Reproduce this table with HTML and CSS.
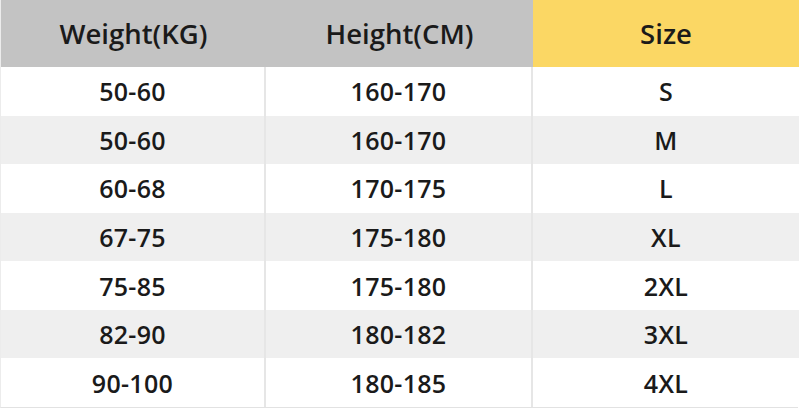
FILE: index.html
```html
<!DOCTYPE html>
<html>
<head>
<meta charset="utf-8">
<link rel="stylesheet" href="styles.css">
</head>
<body>
<div class="chart">
  <div class="cell head gray">Weight(KG)</div>
  <div class="cell head gray">Height(CM)</div>
  <div class="cell head yellow">Size</div>

  <div class="cell">50-60</div><div class="cell">160-170</div><div class="cell">S</div>
  <div class="cell alt">50-60</div><div class="cell alt">160-170</div><div class="cell alt">M</div>
  <div class="cell">60-68</div><div class="cell">170-175</div><div class="cell">L</div>
  <div class="cell alt">67-75</div><div class="cell alt">175-180</div><div class="cell alt">XL</div>
  <div class="cell">75-85</div><div class="cell">175-180</div><div class="cell">2XL</div>
  <div class="cell alt">82-90</div><div class="cell alt">180-182</div><div class="cell alt">3XL</div>
  <div class="cell">90-100</div><div class="cell">180-185</div><div class="cell">4XL</div>
</div>
</body>
</html>
```
FILE: styles.css
```css
html, body {
  margin: 0;
  padding: 0;
  background: #ffffff;
}
.chart {
  width: 798px;
  height: 408px;
  display: grid;
  grid-template-columns: 265px 267px 266px;
  grid-template-rows: 67px repeat(7, 1fr);
  border-right: 1px solid #e2e2e2;
  border-left: 1px solid #ececec;
  border-bottom: 1px solid #e2e2e2;
  box-sizing: border-box;
  font-family: "Open Sans", "Noto Sans", sans-serif;
  font-weight: 600;
  color: #1a1a1a;
}
.cell {
  display: flex;
  align-items: center;
  justify-content: center;
  font-size: 25px;
  letter-spacing: 0.3px;
  background: #ffffff;
  border-right: 2px solid #e6e6e6;
  box-sizing: border-box;
}
.cell:nth-child(3n) {
  border-right: none;
}
.cell.alt {
  background: #efefef;
}
.head {
  font-size: 27.5px;
  letter-spacing: 0;
  border-right: none;
}
.gray {
  background: #c3c3c3;
}
.yellow {
  background: #fbd764;
}
```
